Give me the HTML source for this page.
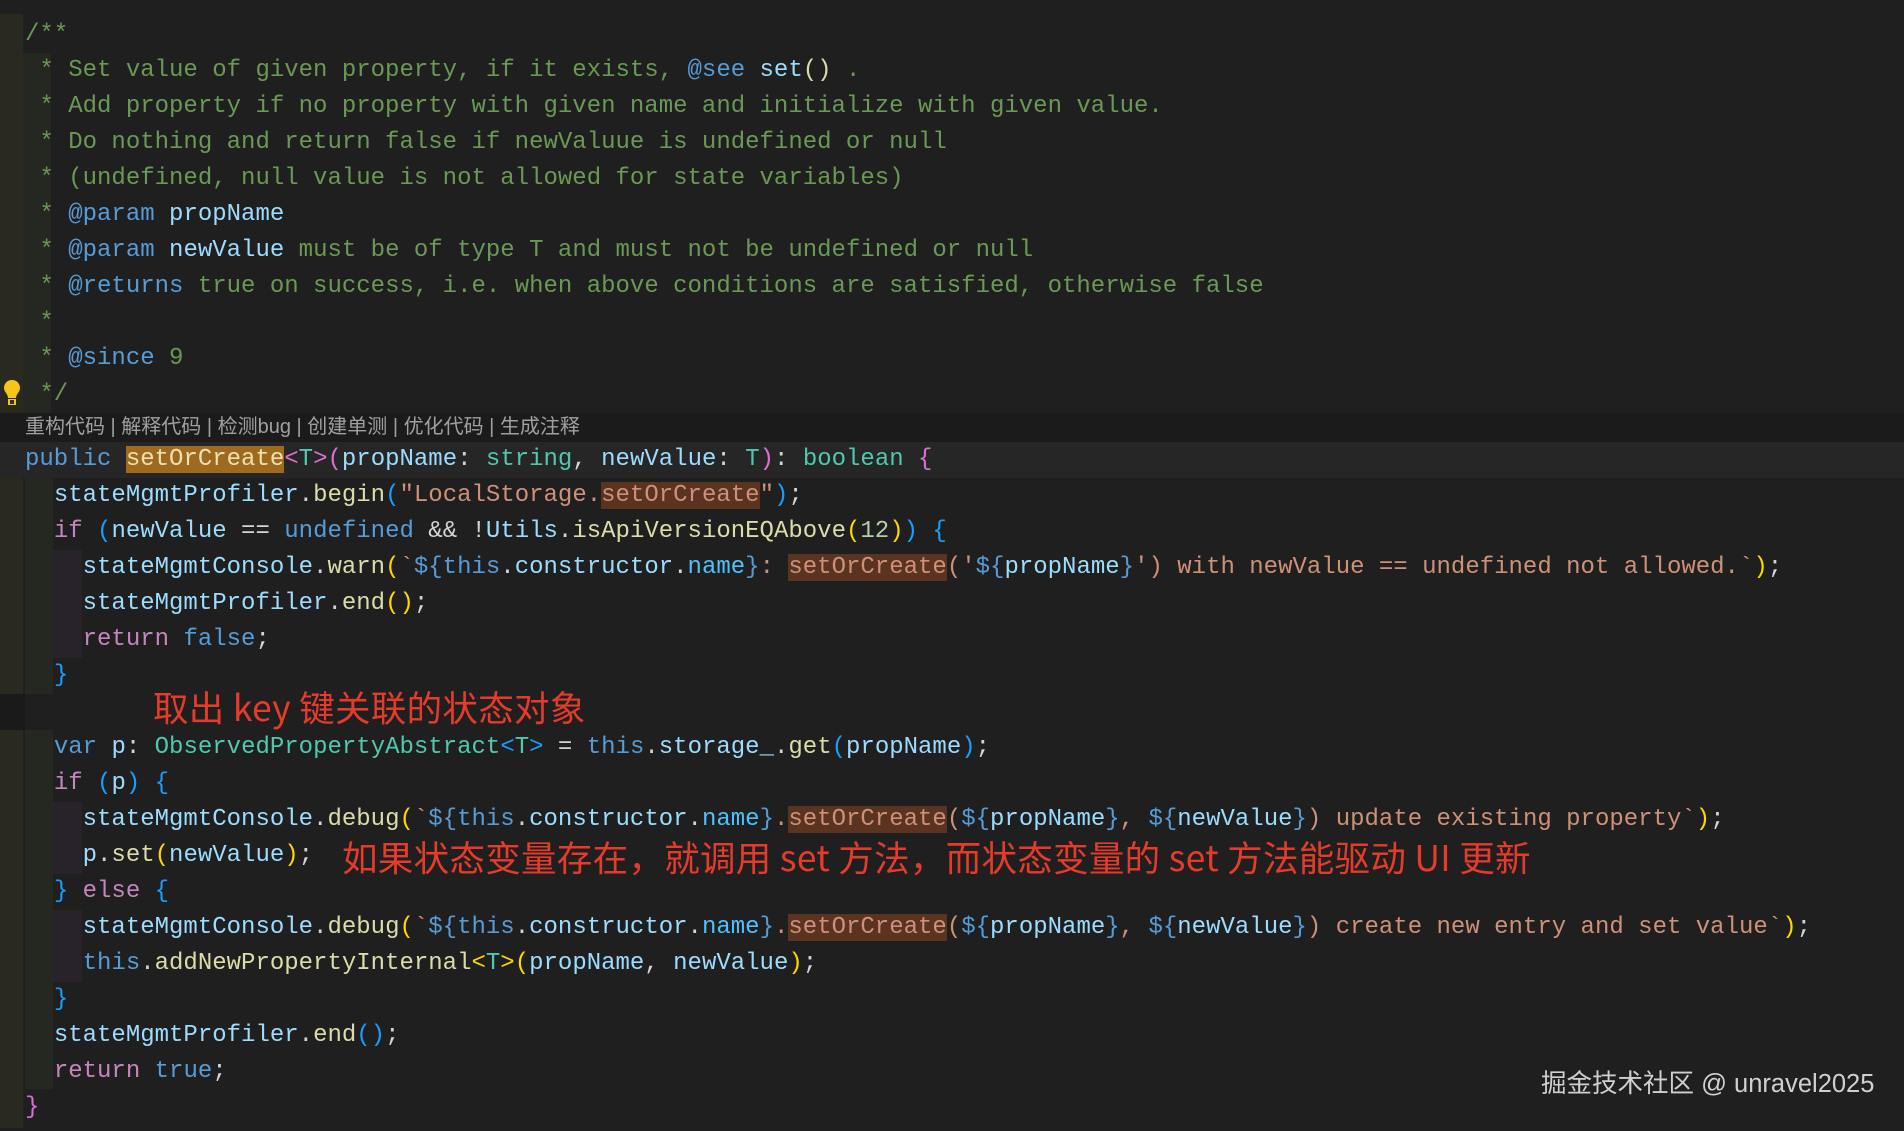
<!DOCTYPE html>
<html><head><meta charset="utf-8"><style>
html,body{margin:0;padding:0;width:1904px;height:1128px;background:#1f1f1f;overflow:hidden}
#w{position:absolute;left:0;top:3px;width:1904px;height:1128px}
.l{position:absolute;left:25px;height:36px;line-height:36px;white-space:pre;font-family:"Liberation Mono",monospace;font-size:24px;color:#d4d4d4}
.c{color:#6a9955}.k{color:#569cd6}.p{color:#c586c0}.f{color:#dcdcaa}.v{color:#9cdcfe}.t{color:#4ec9b0}.s{color:#ce9178}.n{color:#b5cea8}.g{color:#ffd700}.m{color:#da70d6}.b{color:#179fff}.w{color:#d4d4d4}.nm{color:#4fc1ff}
.h1{background:#9d6a1f;color:#f0e0b0}.h2{background:#5a3420}
.strip{position:absolute}
.ann{position:absolute;font-family:"Noto Sans CJK SC","Liberation Sans",sans-serif;color:#e63b2b;font-size:35.5px;line-height:36px;white-space:pre;letter-spacing:0.3px}
</style></head><body>
<div class="strip" style="left:0;top:14px;width:23px;height:1114px;background:#29291f"></div>
<div id="w">
<div class="strip" style="left:23px;top:50px;width:28px;height:360px;background:#242820"></div>
<div class="strip" style="left:0;top:410px;width:1904px;height:29px;background:#1b1b1b"></div>
<div class="strip" style="left:0;top:439px;width:1904px;height:36px;background:#262626"></div>
<div class="strip" style="left:25px;top:475px;width:28px;height:216px;background:#242820"></div>
<div class="strip" style="left:25px;top:727px;width:28px;height:359px;background:#242820"></div>
<div class="strip" style="left:0;top:691px;width:25px;height:36px;background:#1a1a1a"></div>
<div class="strip" style="left:53px;top:547px;width:29px;height:108px;background:#28222a"></div>
<div class="strip" style="left:53px;top:799px;width:29px;height:72px;background:#28222a"></div>
<div class="strip" style="left:53px;top:907px;width:29px;height:72px;background:#28222a"></div>
<svg style="position:absolute;left:2px;top:376px" width="20" height="28" viewBox="0 0 20 28"><path d="M10 1C5 1 2 5 2 9c0 4 4 6 4 10h8c0-4 4-6 4-10 0-4-3-8-8-8z" fill="#f5c518"/><rect x="6" y="20" width="8" height="6" fill="#f5c518"/><rect x="8" y="21" width="4" height="4" fill="#333"/></svg>

<div class="l c" style="top:14px">/**</div>
<div class="l c" style="top:50px"> * Set value of given property, if it exists, <span class="k">@see</span> <span class="v">set</span><span class="f">()</span> .</div>
<div class="l c" style="top:86px"> * Add property if no property with given name and initialize with given value.</div>
<div class="l c" style="top:122px"> * Do nothing and return false if newValuue is undefined or null</div>
<div class="l c" style="top:158px"> * (undefined, null value is not allowed for state variables)</div>
<div class="l c" style="top:194px"> * <span class="k">@param</span> <span class="v">propName</span></div>
<div class="l c" style="top:230px"> * <span class="k">@param</span> <span class="v">newValue</span> must be of type T and must not be undefined or null</div>
<div class="l c" style="top:266px"> * <span class="k">@returns</span> true on success, i.e. when above conditions are satisfied, otherwise false</div>
<div class="l c" style="top:302px"> *</div>
<div class="l c" style="top:338px"> * <span class="k">@since</span> 9</div>
<div class="l c" style="top:374px"> */</div>
<div style="position:absolute;left:25px;top:410px;height:29px;line-height:29px;font-family:'Liberation Sans','Noto Sans CJK SC',sans-serif;font-size:20px;color:#a0a0a0;white-space:pre">重构代码 | 解释代码 | 检测bug | 创建单测 | 优化代码 | 生成注释</div>

<div class="l" style="top:439px"><span class="k">public</span> <span class="h1">setOrCreate</span><span class="m">&lt;</span><span class="t">T</span><span class="m">&gt;(</span><span class="v">propName</span>: <span class="t">string</span>, <span class="v">newValue</span>: <span class="t">T</span><span class="m">)</span>: <span class="t">boolean</span> <span class="m">{</span></div>
<div class="l" style="top:475px">  <span class="v">stateMgmtProfiler</span>.<span class="f">begin</span><span class="b">(</span><span class="s">"LocalStorage.<span class="h2">setOrCreate</span>"</span><span class="b">)</span>;</div>
<div class="l" style="top:511px">  <span class="p">if</span> <span class="b">(</span><span class="v">newValue</span> == <span class="k">undefined</span> &amp;&amp; !<span class="v">Utils</span>.<span class="f">isApiVersionEQAbove</span><span class="g">(</span><span class="n">12</span><span class="g">)</span><span class="b">)</span> <span class="b">{</span></div>
<div class="l" style="top:547px">    <span class="v">stateMgmtConsole</span>.<span class="f">warn</span><span class="g">(</span><span class="s">`</span><span class="k">${this</span>.<span class="v">constructor</span>.<span class="nm">name</span><span class="k">}</span><span class="s">: <span class="h2">setOrCreate</span>('</span><span class="k">${</span><span class="v">propName</span><span class="k">}</span><span class="s">') with newValue == undefined not allowed.`</span><span class="g">)</span>;</div>
<div class="l" style="top:583px">    <span class="v">stateMgmtProfiler</span>.<span class="f">end</span><span class="g">()</span>;</div>
<div class="l" style="top:619px">    <span class="p">return</span> <span class="k">false</span>;</div>
<div class="l" style="top:655px">  <span class="b">}</span></div>
<div class="ann" style="left:153px;top:686px">取出 key 键关联的状态对象</div>
<div class="l" style="top:727px">  <span class="k">var</span> <span class="v">p</span>: <span class="t">ObservedPropertyAbstract</span><span class="b">&lt;</span><span class="t">T</span><span class="b">&gt;</span> = <span class="k">this</span>.<span class="v">storage_</span>.<span class="f">get</span><span class="b">(</span><span class="v">propName</span><span class="b">)</span>;</div>
<div class="l" style="top:763px">  <span class="p">if</span> <span class="b">(</span><span class="v">p</span><span class="b">)</span> <span class="b">{</span></div>
<div class="l" style="top:799px">    <span class="v">stateMgmtConsole</span>.<span class="f">debug</span><span class="g">(</span><span class="s">`</span><span class="k">${this</span>.<span class="v">constructor</span>.<span class="nm">name</span><span class="k">}</span><span class="s">.<span class="h2">setOrCreate</span>(</span><span class="k">${</span><span class="v">propName</span><span class="k">}</span><span class="s">, </span><span class="k">${</span><span class="v">newValue</span><span class="k">}</span><span class="s">) update existing property`</span><span class="g">)</span>;</div>
<div class="l" style="top:835px">    <span class="v">p</span>.<span class="f">set</span><span class="g">(</span><span class="v">newValue</span><span class="g">)</span>;</div>
<div class="ann" style="left:342px;top:836px">如果状态变量存在，就调用 set 方法，而状态变量的 set 方法能驱动 UI 更新</div>
<div class="l" style="top:871px">  <span class="b">}</span> <span class="p">else</span> <span class="b">{</span></div>
<div class="l" style="top:907px">    <span class="v">stateMgmtConsole</span>.<span class="f">debug</span><span class="g">(</span><span class="s">`</span><span class="k">${this</span>.<span class="v">constructor</span>.<span class="nm">name</span><span class="k">}</span><span class="s">.<span class="h2">setOrCreate</span>(</span><span class="k">${</span><span class="v">propName</span><span class="k">}</span><span class="s">, </span><span class="k">${</span><span class="v">newValue</span><span class="k">}</span><span class="s">) create new entry and set value`</span><span class="g">)</span>;</div>
<div class="l" style="top:943px">    <span class="k">this</span>.<span class="f">addNewPropertyInternal</span><span class="g">&lt;</span><span class="t">T</span><span class="g">&gt;(</span><span class="v">propName</span>, <span class="v">newValue</span><span class="g">)</span>;</div>
<div class="l" style="top:979px">  <span class="b">}</span></div>
<div class="l" style="top:1015px">  <span class="v">stateMgmtProfiler</span>.<span class="f">end</span><span class="b">()</span>;</div>
<div class="l" style="top:1051px">  <span class="p">return</span> <span class="k">true</span>;</div>
<div class="l" style="top:1087px"><span class="m">}</span></div>
</div>
<div style="position:absolute;left:1541px;top:1067px;font-family:'Liberation Sans','Noto Sans CJK SC',sans-serif;font-size:25.5px;line-height:34px;color:#d0d0d0;white-space:pre">掘金技术社区 @ unravel2025</div>
</body></html>
